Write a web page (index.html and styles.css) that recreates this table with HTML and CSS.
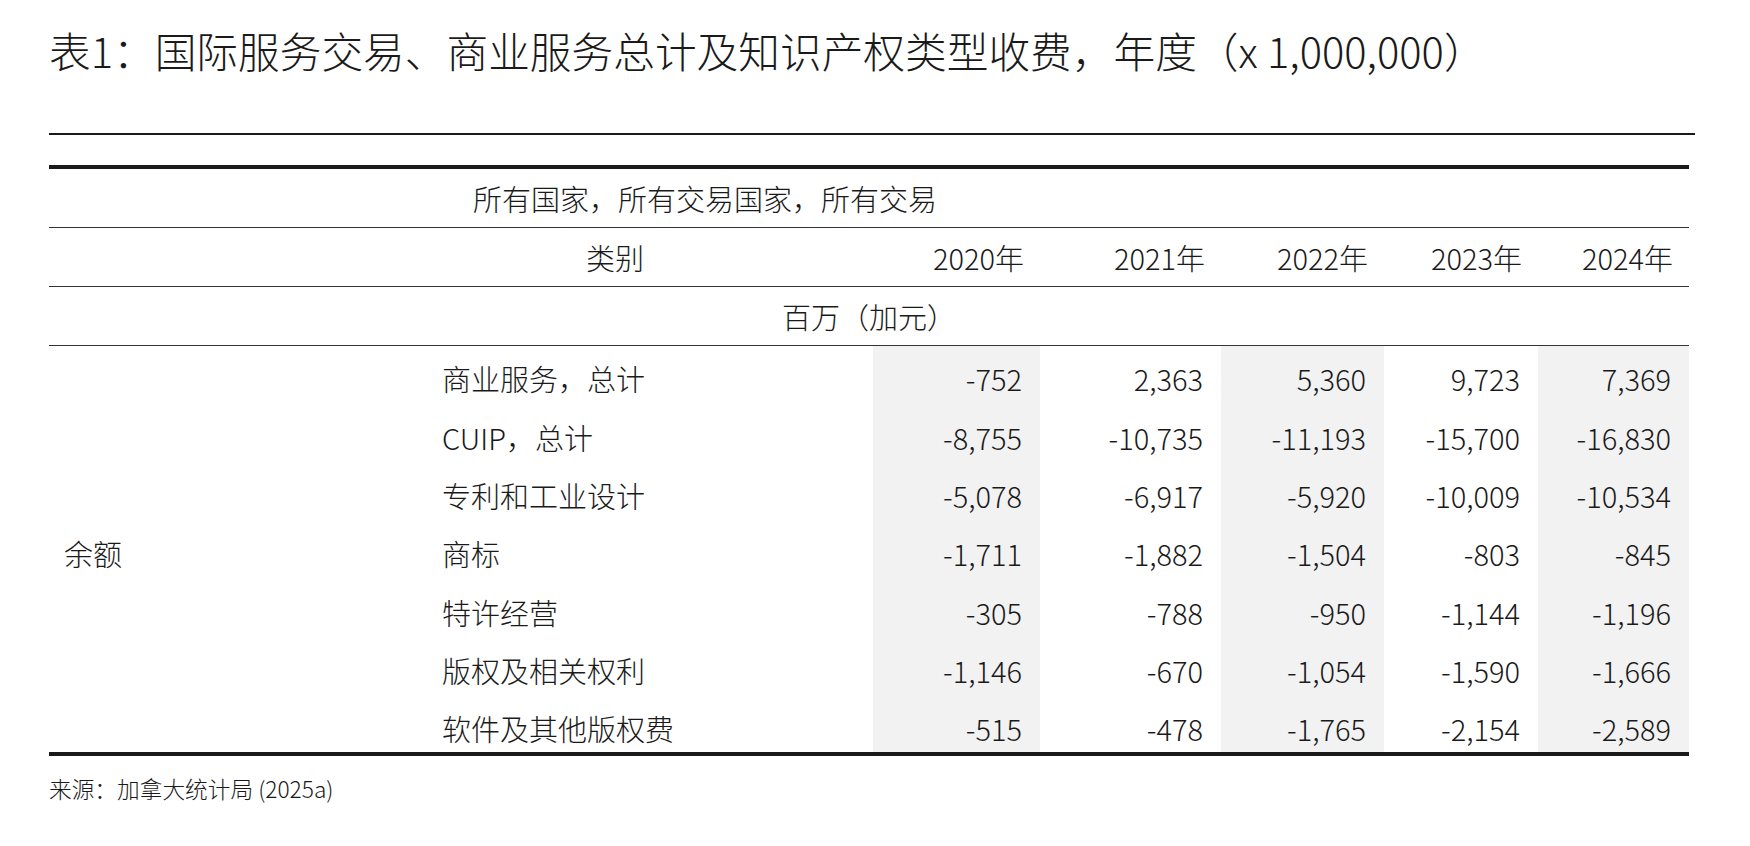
FILE: index.html
```html
<!DOCTYPE html>
<html lang="zh-CN">
<head>
<meta charset="utf-8">
<title>表1</title>
<link rel="stylesheet" href="styles.css">
</head>
<body>
<div class="page">
  <h1 class="title">表1：国际服务交易、商业服务总计及知识产权类型收费，年度（x 1,000,000）</h1>
  <table class="data">
    <colgroup>
      <col class="c-group">
      <col class="c-label">
      <col class="c-y2020">
      <col class="c-y2021">
      <col class="c-y2022">
      <col class="c-y2023">
      <col class="c-y2024">
    </colgroup>
    <thead>
      <tr class="hrow">
        <th colspan="7" class="geo">所有国家，所有交易国家，所有交易</th>
      </tr>
      <tr class="hrow">
        <th class="blank"></th>
        <th class="cat">类别</th>
        <th class="yr">2020年</th>
        <th class="yr">2021年</th>
        <th class="yr">2022年</th>
        <th class="yr">2023年</th>
        <th class="yr">2024年</th>
      </tr>
      <tr class="hrow">
        <th colspan="7" class="unit">百万（加元）</th>
      </tr>
    </thead>
    <tbody>
      <tr>
        <th rowspan="7" class="grp">余额</th>
        <th class="lbl">商业服务，总计</th>
        <td class="num shade">-752</td><td class="num">2,363</td><td class="num shade">5,360</td><td class="num">9,723</td><td class="num shade">7,369</td>
      </tr>
      <tr>
        <th class="lbl">CUIP，总计</th>
        <td class="num shade">-8,755</td><td class="num">-10,735</td><td class="num shade">-11,193</td><td class="num">-15,700</td><td class="num shade">-16,830</td>
      </tr>
      <tr>
        <th class="lbl">专利和工业设计</th>
        <td class="num shade">-5,078</td><td class="num">-6,917</td><td class="num shade">-5,920</td><td class="num">-10,009</td><td class="num shade">-10,534</td>
      </tr>
      <tr>
        <th class="lbl">商标</th>
        <td class="num shade">-1,711</td><td class="num">-1,882</td><td class="num shade">-1,504</td><td class="num">-803</td><td class="num shade">-845</td>
      </tr>
      <tr>
        <th class="lbl">特许经营</th>
        <td class="num shade">-305</td><td class="num">-788</td><td class="num shade">-950</td><td class="num">-1,144</td><td class="num shade">-1,196</td>
      </tr>
      <tr>
        <th class="lbl">版权及相关权利</th>
        <td class="num shade">-1,146</td><td class="num">-670</td><td class="num shade">-1,054</td><td class="num">-1,590</td><td class="num shade">-1,666</td>
      </tr>
      <tr>
        <th class="lbl">软件及其他版权费</th>
        <td class="num shade">-515</td><td class="num">-478</td><td class="num shade">-1,765</td><td class="num">-2,154</td><td class="num shade">-2,589</td>
      </tr>
    </tbody>
  </table>
  <p class="source">来源：加拿大统计局 (2025a)</p>
</div>
</body>
</html>
```
FILE: styles.css
```css
html, body {
  margin: 0;
  padding: 0;
  background: #ffffff;
}

body {
  font-family: "Noto Sans CJK SC", "Noto Sans", sans-serif;
  font-weight: 300;
  color: #1a1a1a;
}

.page {
  padding: 22px 0 0 49px;
}

.title {
  width: 1646px;
  margin: 0;
  font-size: 41.7px;
  font-weight: 300;
  line-height: 56px;
  padding-bottom: 55px;
  border-bottom: 2px solid #1a1a1a;
}

.data {
  margin-top: 30px;
  width: 1640px;
  border-collapse: collapse;
  table-layout: fixed;
  font-size: 29px;
  border-top: 4px solid #1a1a1a;
  border-bottom: 4px solid #1a1a1a;
}

.c-group { width: 308px; }
.c-label { width: 516px; }
.c-y2020 { width: 167px; }
.c-y2021 { width: 181px; }
.c-y2022 { width: 163px; }
.c-y2023 { width: 154px; }
.c-y2024 { width: 151px; }

.data th,
.data td {
  padding: 0;
  font-weight: 300;
  white-space: nowrap;
}

.hrow th {
  height: 58px;
  border-bottom: 1px solid #333333;
}

.geo {
  text-align: left;
  padding-left: 424px !important;
}

.cat {
  text-align: center;
}

.yr {
  text-align: right;
  padding-right: 16px !important;
}

.unit {
  text-align: center;
}

.data tbody tr {
  height: 58.4px;
}

.data tbody th,
.data tbody td {
  padding-top: 7px !important;
}

.grp {
  text-align: left;
  padding-left: 15px !important;
}

.lbl {
  text-align: left;
  padding-left: 85px !important;
}

.num {
  text-align: right;
  padding-right: 18px !important;
}

.shade {
  background: #f2f2f2;
}

.source {
  margin: 18px 0 0 0;
  font-size: 22.7px;
  line-height: 30px;
}
```
